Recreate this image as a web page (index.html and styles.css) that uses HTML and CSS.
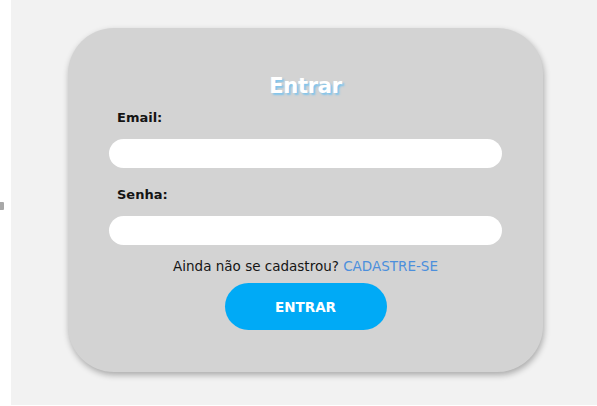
FILE: index.html
```html
<!DOCTYPE html>
<html lang="pt-BR">
<head>
<meta charset="utf-8">
<title>Entrar</title>
<link rel="stylesheet" href="styles.css">
</head>
<body>
<div class="layout">
  <div class="gutter"><span class="gutter-mark"></span></div>
  <main class="page">
    <form class="card">
      <h1 class="title">Entrar</h1>
      <label class="label label-email" for="email">Email:</label>
      <input class="field" id="email" type="email">
      <label class="label label-senha" for="senha">Senha:</label>
      <input class="field field-senha" id="senha" type="password">
      <p class="signup">Ainda não se cadastrou? <a class="signup-link" href="#">CADASTRE-SE</a></p>
      <button class="btn" type="button">ENTRAR</button>
    </form>
  </main>
</div>
</body>
</html>
```
FILE: styles.css
```css
html, body {
  margin: 0;
  padding: 0;
  background: #ffffff;
}
body {
  font-family: "DejaVu Sans", "Open Sans", sans-serif;
  color: #111111;
}
.layout {
  display: flex;
  width: 597px;
  height: 406px;
}
.gutter {
  width: 11px;
  flex: none;
  display: flex;
  align-items: center;
}
.gutter-mark {
  display: block;
  width: 4px;
  height: 8px;
  margin-top: 6px;
  background: #a8a8a8;
  border-radius: 0 1px 1px 0;
}
.page {
  flex: 1;
  height: 405px;
  background: #f2f2f2;
  padding-top: 28px;
  box-sizing: border-box;
}
.card {
  width: 475px;
  height: 344px;
  margin: 0 0 0 57px;
  box-sizing: border-box;
  background: #d3d3d3;
  border-radius: 46px;
  box-shadow: 1px 3px 6px rgba(0, 0, 0, 0.3);
  padding: 43px 41px 0 41px;
  display: flex;
  flex-direction: column;
}
.title {
  margin: 0;
  text-align: center;
  font-size: 21px;
  line-height: 30px;
  font-weight: 700;
  color: #ffffff;
  text-shadow: 2px 2px 2px #7fc4ec;
  letter-spacing: -0.3px;
}
.label {
  display: block;
  margin: 7px 0 0 8px;
  font-size: 13px;
  line-height: 20px;
  font-weight: 700;
  color: #141414;
}
.label-senha {
  margin-top: 17px;
}
.field {
  display: block;
  width: 393px;
  height: 29px;
  margin: 11px 0 0 0;
  box-sizing: border-box;
  border: none;
  border-radius: 15px;
  background: #ffffff;
  outline: none;
  padding: 0 14px;
}
.field-senha {
  margin-top: 11px;
}
.signup {
  margin: 11px 0 0 0;
  text-align: center;
  font-size: 13.5px;
  line-height: 20px;
  color: #151515;
}
.signup-link {
  color: #4c8fdc;
  text-decoration: none;
}
.btn {
  align-self: center;
  margin-top: 7px;
  width: 162px;
  height: 47px;
  border: none;
  border-radius: 24px;
  background: #00aaf6;
  color: #ffffff;
  font-family: inherit;
  font-size: 13.5px;
  font-weight: 700;
  cursor: pointer;
}
```
